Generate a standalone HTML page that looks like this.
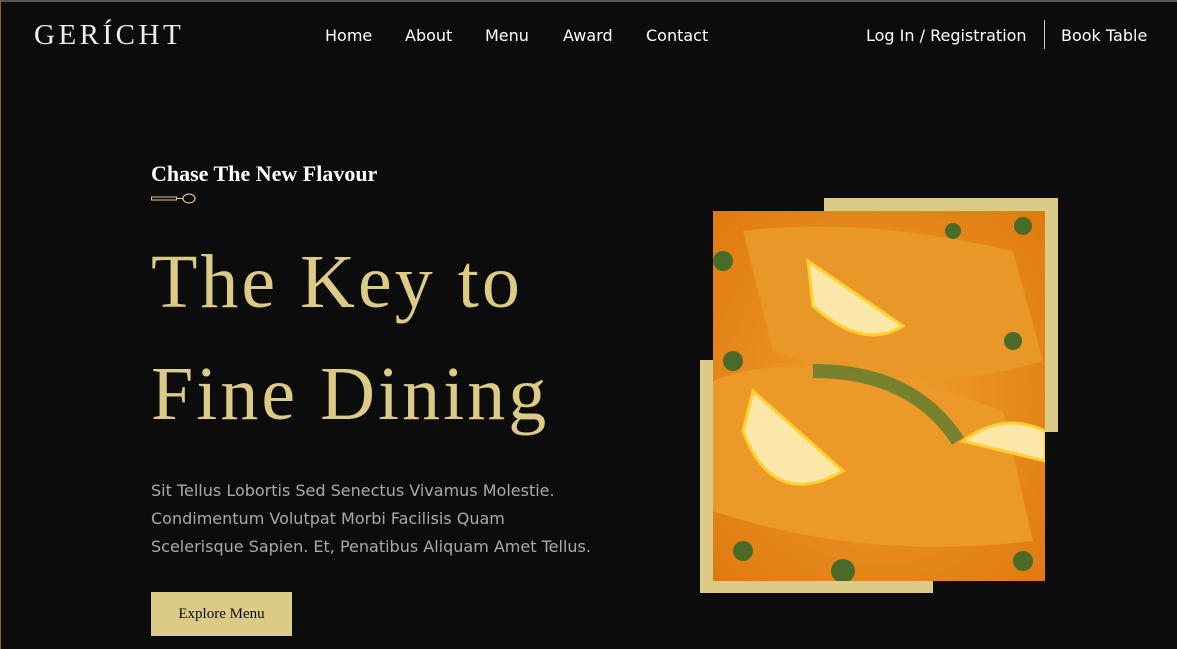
<!DOCTYPE html>
<html><head><style>
*{margin:0;padding:0;box-sizing:border-box}
body{width:1177px;height:649px;background:#0c0c0c;overflow:hidden;position:relative;font-family:"Liberation Sans",sans-serif}
.abs{position:absolute}
.nav{color:#fff;top:26px;font-family:"DejaVu Sans","Liberation Sans",sans-serif;font-size:16px}
.serif{font-family:"Liberation Serif",serif}
</style></head><body>
<div class="abs" style="left:0;top:0;width:1177px;height:2px;background:#555"></div>
<div class="abs" style="left:0;top:0;width:1px;height:649px;background:#7a6a45"></div>
<div class="abs serif" style="left:34px;top:19px;color:#eee;font-size:29px;letter-spacing:3.5px">GERÍCHT</div>
<div class="abs nav" style="left:325px">Home</div>
<div class="abs nav" style="left:405px">About</div>
<div class="abs nav" style="left:485px">Menu</div>
<div class="abs nav" style="left:563px">Award</div>
<div class="abs nav" style="left:646px">Contact</div>
<div class="abs nav" style="left:866px">Log In / Registration</div>
<div class="abs" style="left:1044px;top:20px;width:1px;height:29px;background:#ccc"></div>
<div class="abs nav" style="left:1061px">Book Table</div>
<div class="abs serif" style="left:151px;top:161px;color:#fff;font-size:22px;font-weight:bold">Chase The New Flavour</div>
<svg class="abs" style="left:151px;top:193px" width="46" height="12"><rect x="0.5" y="4" width="25" height="3" fill="none" stroke="#dcca87" stroke-width="1"/><line x1="26" y1="5.5" x2="32" y2="5.5" stroke="#dcca87"/><ellipse cx="38" cy="5.5" rx="6" ry="4.5" fill="none" stroke="#dcca87" stroke-width="1.2"/></svg>
<div class="abs serif" style="left:151px;top:226px;color:#dcca87;font-size:76px;line-height:112px;letter-spacing:3px">The Key to<br>Fine Dining</div>
<div class="abs" style="left:151px;top:477px;color:#aaa;line-height:28px;font-family:'DejaVu Sans',sans-serif;font-size:16px">Sit Tellus Lobortis Sed Senectus Vivamus Molestie.<br>Condimentum Volutpat Morbi Facilisis Quam<br>Scelerisque Sapien. Et, Penatibus Aliquam Amet Tellus.</div>
<div class="abs serif" style="left:151px;top:592px;width:141px;height:44px;background:#dcca87;color:#0c0c0c;font-size:15px;text-align:center;line-height:44px">Explore Menu</div>
<div class="abs" style="left:824px;top:198px;width:234px;height:234px;background:#dcca87"></div>
<div class="abs" style="left:700px;top:360px;width:233px;height:233px;background:#dcca87"></div>
<svg class="abs" style="left:713px;top:211px" width="332" height="370">
<defs><radialGradient id="g" cx="50%" cy="50%" r="70%"><stop offset="0" stop-color="#f0a030"/><stop offset="1" stop-color="#e07a10"/></radialGradient></defs>
<rect width="332" height="370" fill="url(#g)"/>
<path d="M30 20 Q150 5 300 40 L330 150 Q200 190 60 140 Z" fill="#e89828"/>
<path d="M0 170 Q100 130 290 200 L320 330 Q150 350 0 300 Z" fill="#eb9a2a"/>
<path d="M95 50 L190 115 Q150 140 100 95 Z" fill="#fbe7a8" stroke="#ffd030" stroke-width="3"/>
<path d="M40 180 L130 260 Q60 300 30 220 Z" fill="#fbe7a8" stroke="#ffd030" stroke-width="3"/>
<path d="M250 230 Q290 200 332 220 L332 250 Z" fill="#fbe7a8" stroke="#ffd030" stroke-width="3"/>
<path d="M100 160 Q200 160 245 230" stroke="#5a7a30" stroke-width="14" fill="none" opacity=".8"/>
<g fill="#4a6a28"><circle cx="10" cy="50" r="10"/><circle cx="20" cy="150" r="10"/><circle cx="310" cy="15" r="9"/><circle cx="300" cy="130" r="9"/><circle cx="30" cy="340" r="10"/><circle cx="130" cy="360" r="12"/><circle cx="310" cy="350" r="10"/><circle cx="240" cy="20" r="8"/></g>
</svg>
</body></html>
